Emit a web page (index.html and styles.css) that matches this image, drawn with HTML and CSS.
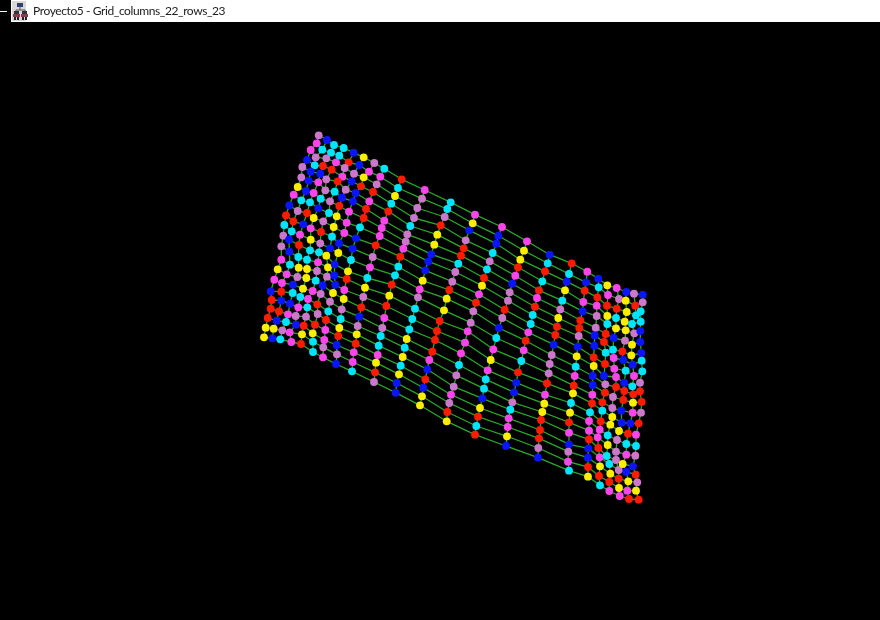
FILE: index.html
```html
<!DOCTYPE html>
<html lang="es">
<head>
<meta charset="utf-8">
<title>Proyecto5 - Grid_columns_22_rows_23</title>
<link rel="stylesheet" href="styles.css">
</head>
<body>
<header class="titlebar">
  <div class="sysmenu"><span class="dash"></span></div>
  <div class="caption">
    <svg class="app-icon" width="17" height="20" viewBox="0 0 17 20">
      <rect x="0" y="0" width="14" height="20" fill="#d8d8d8"/>
      <path d="M8 6V9M4 12V9H13V12" fill="none" stroke="#555" stroke-width="1"/>
      <rect x="5" y="2" width="6" height="4" fill="#33406e"/>
      <rect x="2" y="10" width="5" height="3" fill="#333"/>
      <rect x="10" y="10" width="5" height="3" fill="#333"/>
      <rect x="1" y="13" width="7" height="3" fill="#8a3a55"/>
      <rect x="9" y="13" width="7" height="3" fill="#8a3a55"/>
      <rect x="2" y="16" width="2" height="3" fill="#222"/>
      <rect x="5" y="16" width="2" height="3" fill="#222"/>
      <rect x="10" y="16" width="2" height="3" fill="#222"/>
      <rect x="13" y="16" width="2" height="3" fill="#222"/>
    </svg>
    <span class="title">Proyecto5 - Grid_columns_22_rows_23</span>
  </div>
</header>
<main class="canvas">
  <svg id="grid" class="grid" width="880" height="598" viewBox="0 22 880 598"></svg>
</main>
<script src="grid.js"></script>
</body>
</html>
```
FILE: styles.css
```css
* { box-sizing: border-box; }
html, body { margin: 0; padding: 0; height: 100%; background: #000; overflow: hidden; }
body { display: flex; flex-direction: column; width: 880px; height: 620px; }
.titlebar { display: flex; flex: 0 0 22px; height: 22px; }
.sysmenu { flex: 0 0 11px; display: flex; align-items: flex-start; padding-top: 11px; }
.dash { display: block; width: 7px; height: 1px; background: #fff; }
.caption { flex: 1; display: flex; align-items: center; background: #fff; padding-left: 1px; gap: 4px; }
.app-icon { display: block; flex: none; filter: blur(0.4px); }
.title { font-family: Lato, "Liberation Sans", sans-serif; font-size: 12px; letter-spacing: -0.4px; color: #1c1c1c; white-space: nowrap; position: relative; top: -1px; filter: blur(0.25px); }
.canvas { flex: 1; background: #000; }
.grid { display: block; }
.link { stroke: #2aa82a; stroke-width: 1.3; fill: none; }
.dot-r { fill: #ff1a00; }
.dot-b { fill: #0a14ff; }
.dot-c { fill: #00e5ff; }
.dot-y { fill: #ffee00; }
.dot-m { fill: #ff44ee; }
.dot-p { fill: #cc77cc; }
```
FILE: grid.js
```js
var COLS = [
"318.7,135.3p 316.7,143.3m 310.7,150m 307,160b 302.3,167p 301.3,177.3p 297.7,187y 293.7,194.7m 289.3,205.3b 286,215.3r 284.3,225c 283.3,235.7p 281.3,246.3p 281.3,259.7m 277.7,269.3y 274.3,279.7m 270.7,291.3b 271.7,300r 270.7,308.7r 267.7,318r 265.7,327.7y 264,337.3y",
"327,140b 322.3,149.7c 315.7,157.3p 314.7,165.3c 310.7,171.7b 308.7,180.7b 306,191b 301.3,200.3c 297.7,211p 293.3,221.3r 291.7,231.3c 289,239.7b 289.3,251.7b 290,264.7c 286.7,274.3m 282,283m 281.3,291.7r 281.3,300.7b 279,311.3r 276.7,320.7b 273.7,328.7y 272.3,338.3b",
"334,145c 331,152.7c 326.3,158.3p 323,166r 320.3,173.7b 318.3,182.3m 313.7,193m 310,202.3c 307,213r 303.3,224.3b 300,234.7m 299,245r 298.3,257c 298.7,267.7y 297.3,277p 293,284.7b 292.7,293c 290,303.7b 288,314.3m 286,322c 282.3,330.3p 280.3,339.3c",
"343.7,148c 339.3,155.7c 336,162.3m 331.7,169.7r 326.3,179.3p 325.3,190.3p 320.7,198.7c 318.3,208.3b 313.7,218y 310.7,228.3m 310.7,239.7y 310,250.3c 307,259.7c 307,269y 306.3,278y 303,288.7y 300.3,297c 298.3,307.3m 295.7,316p 296,324.7b 289.7,332.3m 291.3,342m",
"353.7,152.7b 348.7,162.3r 344.7,168p 342.3,176.7m 337.7,181.3r 334.7,191.7c 330,201.3p 329,213c 323.3,221.3p 321,232r 320.3,243.3p 319,252.3c 318,262.3m 317,271p 315.7,280.7c 312.7,291m 308,299m 307.3,307.3c 306,316.7p 303.7,325.7r 302,334.3y 301,344r",
"363.7,157.3y 359.3,165b 354,173.7p 351.7,181.3b 345.7,189.7p 342,197.7b 339.3,206r 336.7,216.3y 333.7,227y 332,236.7c 330,248.3b 326.3,255.7y 328,267.3y 327,276.7p 322.7,285.3b 320.7,294p 317.3,304.3r 317.7,314p 315,324.7r 312.7,333.3y 313,341.7c 313,352c",
"374.3,163p 369,171.7m 363.7,177.3y 361,186.3r 355.7,193b 353,201.3b 349,211.7m 346.7,222.7m 344.3,233m 339,243.3b 338.3,253y 334.7,264.3b 334.3,275.3b 335.3,284.7b 333,293y 330,301.7p 328.3,311.3c 326,320r 325.3,330m 324.3,340m 323.3,347.3p 323,357.3m",
"384.3,168.7c 380.3,176.7m 376.7,184.3p 373,192r 369.3,201.3m 366,209r 363.7,218r 360,227.3c 356,238.3b 352.7,248.7b 351,260c 348,271.3y 346.7,279r 344.3,290m 343.7,299y 341.7,309.3p 340.7,319c 339.3,328y 338.3,336r 336.7,345b 337,354.3p 336,364b",
"401.7,179.3r 398,188c 395,196y 391.3,203.7c 388.3,211.3r 384.3,220.7m 381.7,228m 379.7,236m 375.7,245.3r 372.7,257p 370,267.3m 367.3,278c 365,287.7y 363.3,297p 361.3,307.3r 359.3,316.7b 357.7,326p 356.7,334.3y 355.7,343.7r 353.7,352.3m 352.7,362m 352,371.3c",
"424.7,190m 422,198.7p 417.3,208p 414,218p 410.3,226c 407.3,234.3p 405.7,241.7p 403.3,248.7m 400.3,256.7r 398.3,266.7c 395,275.3c 391.7,284.7r 389.3,295.7y 386.3,306r 384.3,318m 382.3,328p 380.7,336c 378.7,345.7c 377.7,355m 376,362.7y 375,372.3r 374,382p",
"450.7,202.3c 447.3,209c 444.7,217p 440.7,225.3r 437.3,234.7y 434.3,244.7y 431.3,254.3b 428.3,261.3b 425.3,270.3b 422.7,280.7y 419.7,289.3m 418,297.3p 415,308.7c 412.3,319c 409.3,329.3c 406.7,339y 404.7,347.7c 402.7,357y 400.7,365.7c 399,374.3y 396.7,383b 395.7,392.7b",
"475,214.7m 472.7,223.3y 469.3,230.3b 465.7,240.3p 463.7,248.3r 461,255.7r 458.3,263.7c 455.3,272p 452.3,281.7p 449.3,290r 446.7,298.7y 444,310.3y 439.7,321r 437,331r 435,340r 432.3,351.7r 429.3,360m 427.3,369.3b 425.3,379.3r 423.3,387.7b 422,396.3y 420,405.3y",
"502,227m 498.3,235.7b 496.3,243.7b 492.7,253c 489.7,261.3p 487,269.3c 484,278r 482,285.7y 479,294.3m 476,302.7r 473.3,311.3p 470.7,322.7p 467.7,331.3m 465,342.7m 461,353.3m 459,365c 456.3,375.3p 453.7,386.7p 451,394.7m 449.3,403p 447.3,412r 446.7,421.3y",
"527,241.3m 524,250.7y 520.3,259.7y 518,267.3r 515.3,275.7m 512.3,283.7b 509.7,292.3p 508,300.7p 504.7,309.7r 502.3,318p 499,328b 496.3,338c 493.3,349.3m 490.7,360y 487.7,370.3m 485.7,379.3c 484,388.7c 482.3,398.3b 480,408y 478,416.7r 476.3,426c 475,434.7r",
"549.7,254.7b 547.7,263.3c 545,271.3r 542.3,281.3c 539,290.3r 537,298m 535,306.7r 532.7,315c 530.7,324c 528.3,332.3m 525.7,340.7r 523.7,350.3m 521.3,361c 518,372.3r 516.3,382.7b 514,392.3b 512.3,402.3p 510.3,409.7c 508.7,418.3m 507.7,427m 507,436.3y 506,446b",
"571.7,263.3r 569,274c 566.7,281.7b 565,290.3y 562.3,300.7c 560.3,309.3p 558.3,318y 557,326.7r 555.3,335r 553.7,344.7b 551.7,355p 549.7,364p 548.7,373.3p 547,383.3r 545,394.7m 544.3,403.7y 542.3,412y 541,420r 540,430r 539,438.3r 538.3,448p 538,457.7b",
"587.3,271.7m 586,282.3b 584.7,290.7r 583.3,302m 582.7,311.3b 580.3,320.3r 579.3,328r 578.7,336p 577.7,346.7b 576.7,356.3y 575.7,366.7c 574.7,376m 573.7,385.7r 573,393.3y 571,403c 570,412.7y 569,422.3r 569,432.7m 569,444.3b 568.3,451.7p 568,461.7m 569,470.7c",
"598.3,278.7b 598.7,287.3c 597.3,297.3r 596.7,305.7m 596.7,316p 595.7,327.7p 594.7,335.3b 594.3,345.7b 593.7,357.3r 593.7,366y 592.7,376b 592.7,385b 592.3,394.7m 592,403.3r 590,412.3c 589,421m 589,430.7m 589,439.3r 588.3,448.3b 588,457.7b 588,467r 588,476.7y",
"607.3,285.3y 608,295m 607,305.7r 607.3,316y 607.3,324c 605.7,334r 604,342r 605.7,352.7c 605,364r 604,376b 605.3,384.3p 605,392.7r 602.3,402.3r 602.3,410.7c 600.7,421.3r 599.7,429.7m 597.7,437.3m 598.3,448r 599.7,457.3m 600,466.3y 599,476r 600,485.3c",
"616.7,288m 619,299p 616.7,308.7r 616,318c 616,328.3y 613.7,338b 613,349.7c 613.7,358m 614.3,368.7m 616,377m 616,387r 613,397p 612.3,408p 612.3,417y 610.3,424.7y 607.7,435.3c 607.7,445y 606.7,456c 609.3,464c 610.3,473.7y 609.3,482r 609.3,491m",
"626.3,292b 625.7,300.7y 626.7,312y 624.7,321.7y 625.7,330.3y 625,340.7p 622.3,351.3r 623.3,360b 625.7,370.7c 624.3,382.7b 624.3,391r 623.3,400r 621.3,410.7b 621.7,422.7b 619,431y 617,440p 616,451.7p 616,460p 618.7,470p 618.7,478.7r 619,488y 619.7,496m",
"634,293.7p 635.3,305.7r 636,315.3c 632,324c 634.3,333.3p 632,344.7y 631.3,355.3y 632.7,364.7b 634,376m 632.3,386.3c 633.3,394.3r 633,402.7y 632.7,412.7m 630.3,423.3b 628,433.7r 626.3,444c 626.3,454.7m 622.7,464y 626.3,471.7b 628.3,481.3y 627.3,490.7m 629,499r",
"642.7,294.7b 642.7,302.3p 640.7,311.3c 640.7,321.7c 640.3,331b 640.3,342b 641.3,353b 641.7,360.7c 642.3,371.3c 640,382.7p 640,391.3r 641.7,402r 641,412.7p 638.7,423.3r 636,434.7m 636,446c 635.3,455.7p 633,466.3b 635.7,474.7r 637.3,482.3p 636,490.7y 638.7,499.7r"
];

var NS = "http://www.w3.org/2000/svg";
var svg = document.getElementById("grid");
var cols = COLS.map(function (s) {
  return s.split(" ").map(function (t) {
    var c = t.slice(-1), xy = t.slice(0, -1).split(",");
    return { x: +xy[0], y: +xy[1], c: c };
  });
});

function line(a, b) {
  var l = document.createElementNS(NS, "line");
  l.setAttribute("x1", a.x); l.setAttribute("y1", a.y);
  l.setAttribute("x2", b.x); l.setAttribute("y2", b.y);
  l.setAttribute("class", "link");
  svg.appendChild(l);
}

cols.forEach(function (col, i) {
  col.forEach(function (p, j) {
    if (j + 1 < col.length) line(p, col[j + 1]);
    if (i + 1 < cols.length && cols[i + 1][j]) line(p, cols[i + 1][j]);
  });
});
cols.forEach(function (col) {
  col.forEach(function (p) {
    var d = document.createElementNS(NS, "circle");
    d.setAttribute("cx", p.x); d.setAttribute("cy", p.y); d.setAttribute("r", 3.9);
    d.setAttribute("class", "dot-" + p.c);
    svg.appendChild(d);
  });
});
```
